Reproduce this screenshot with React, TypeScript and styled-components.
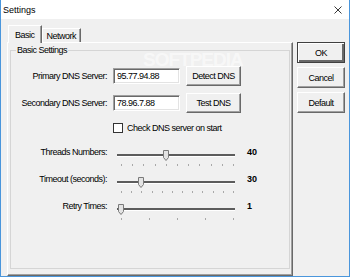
import React from 'react';
import styled, { createGlobalStyle } from 'styled-components';

const GlobalStyle = createGlobalStyle`
  html, body {
    margin: 0;
    padding: 0;
    background: #f0f0f0;
  }
  body {
    font-family: "Liberation Sans", Arial, sans-serif;
    font-size: 9px;
    letter-spacing: -0.5px;
    color: #000;
  }
`;

const Window = styled.div`
  position: relative;
  width: 350px;
  height: 277px;
  box-sizing: border-box;
  border: 1px solid #4a96dc;
  border-top: none;
  display: flex;
  flex-direction: column;
  background: #f0f0f0;
  overflow: hidden;
`;

const TitleBar = styled.div`
  height: 19px;
  flex: none;
  background: #fff;
  display: flex;
  align-items: center;
  justify-content: space-between;
  padding: 0 7px 0 2px;
`;

const Title = styled.span`
  font-size: 9px;
  letter-spacing: 0;
  line-height: 12px;
`;

const Body = styled.div`
  flex: 1;
  display: flex;
  padding: 6px 4px 0 6px;
  gap: 4px;
`;

const TabControl = styled.div`
  width: 286px;
  display: flex;
  flex-direction: column;
`;

const TabStrip = styled.div`
  height: 17px;
  display: flex;
  align-items: flex-end;
  padding-left: 1px;
`;

const Tab = styled.div<{ active?: boolean }>`
  box-sizing: border-box;
  height: ${p => (p.active ? '18px' : '14px')};
  margin-bottom: ${p => (p.active ? '-1px' : '0')};
  padding: 0 ${p => (p.active ? '6px' : '4px')};
  display: flex;
  align-items: center;
  background: #f0f0f0;
  border: 1px solid #fff;
  border-right-color: #696969;
  border-bottom: none;
  box-shadow: inset -1px 0 #a0a0a0;
  position: relative;
  z-index: ${p => (p.active ? 1 : 0)};
  line-height: 12px;
`;

const Panel = styled.div`
  flex: 1;
  box-sizing: border-box;
  display: flex;
  flex-direction: column;
  border: 1px solid;
  border-color: #fff #696969 #696969 #fff;
  box-shadow: inset -1px -1px #a0a0a0;
`;

const Group = styled.fieldset`
  flex: 1;
  margin: 1px 2px 6px 2px;
  padding: 0;
  border: 1px solid #d5d5d5;
  min-width: 0;
`;

const Legend = styled.legend`
  margin-left: 5px;
  padding: 0 1px;
  line-height: 12px;
`;

const Content = styled.div`
  padding-top: 10px;
  display: flex;
  flex-direction: column;
`;

const Row = styled.div<{ top?: number }>`
  display: flex;
  align-items: center;
  height: 20px;
  margin-top: ${p => p.top ?? 0}px;
`;

const SliderRow = styled.div<{ top: number }>`
  display: flex;
  align-items: flex-start;
  height: 20px;
  margin-top: ${p => p.top}px;
`;

const Label = styled.div`
  width: 96px;
  flex: none;
  text-align: right;
  line-height: 12px;
  margin-right: 6px;
  white-space: nowrap;
`;

const TextBox = styled.div`
  width: 67px;
  height: 16px;
  box-sizing: border-box;
  background: #fff;
  border: 1px solid;
  border-color: #a0a0a0 #fff #fff #a0a0a0;
  box-shadow: inset 1px 1px #696969, inset -1px -1px #e3e3e3;
  padding: 1px 0 0 3px;
  line-height: 12px;
`;

const Button = styled.div<{ isDefault?: boolean }>`
  box-sizing: border-box;
  display: flex;
  align-items: center;
  justify-content: center;
  background: #f0f0f0;
  border: 1px solid;
  border-color: ${p => (p.isDefault ? '#404040' : '#fff #696969 #696969 #fff')};
  box-shadow: ${p =>
    p.isDefault
      ? 'inset 1px 1px #fff, inset -2px -2px #696969'
      : 'inset -1px -1px #a0a0a0'};
  line-height: 12px;
  white-space: nowrap;
`;

const SideButton = styled(Button)`
  width: 48px;
  height: 21px;
`;

const DnsButton = styled(Button)`
  width: 55px;
  height: 20px;
  margin-left: 6px;
`;

const ButtonColumn = styled.div`
  display: flex;
  flex-direction: column;
  gap: 4px;
  padding-top: 17px;
`;

const CheckRow = styled.div`
  display: flex;
  align-items: center;
  height: 14px;
  margin-top: 8px;
  padding-left: 102px;
  gap: 4px;
  line-height: 12px;
`;

const CheckBox = styled.div`
  width: 10px;
  height: 10px;
  box-sizing: border-box;
  border: 1px solid #333;
  background: #fff;
`;

const SliderBox = styled.div`
  position: relative;
  width: 126px;
  height: 16px;
  margin-top: 4px;
  flex: none;
`;

const Track = styled.div`
  position: absolute;
  left: 4px;
  right: 4px;
  top: 4px;
  height: 2px;
  background: #5c5c5c;
  border-bottom: 1px solid #fff;
`;

const Ticks = styled.div`
  position: absolute;
  left: 8px;
  top: 14px;
  width: 113px;
  display: flex;
  justify-content: space-between;
`;

const Tick = styled.span`
  width: 1px;
  height: 2px;
  background: #a8a8a8;
`;

const Thumb = styled.svg`
  position: absolute;
  top: 0;
`;

const Value = styled.div`
  margin-left: 8px;
  font-weight: bold;
  letter-spacing: 0;
  line-height: 12px;
`;

const Watermark = styled.div`
  position: absolute;
  left: 142px;
  top: 53px;
  font-weight: bold;
  font-size: 19px;
  line-height: 14px;
  letter-spacing: -1px;
  color: rgba(255, 255, 255, 0.5);
  pointer-events: none;
`;

interface SliderProps {
  label: string;
  value: string;
  ticks: number;
  index: number;
  top: number;
}

const Slider: React.FC<SliderProps> = ({ label, value, ticks, index, top }) => {
  const center = 8 + (112 * index) / (ticks - 1);
  return (
    <SliderRow top={top}>
      <Label>{label}</Label>
      <SliderBox>
        <Track />
        <Ticks>
          {Array.from({ length: ticks }).map((_, i) => (
            <Tick key={i} />
          ))}
        </Ticks>
        <Thumb width="7" height="11" viewBox="0 0 7 11" style={{ left: center - 3 }}>
          <polygon points="0.5,0.5 5.5,0.5 5.5,7.5 3,10.5 0.5,7.5" fill="#e3e3e3" stroke="#7a7a7a" />
        </Thumb>
      </SliderBox>
      <Value>{value}</Value>
    </SliderRow>
  );
};

const CloseIcon = () => (
  <svg width="8" height="8" viewBox="0 0 8 8">
    <path d="M0.5 0.5 L7.5 7.5 M7.5 0.5 L0.5 7.5" stroke="#222" strokeWidth="0.9" />
  </svg>
);

export default function App() {
  return (
    <>
      <GlobalStyle />
      <Window>
        <TitleBar>
          <Title>Settings</Title>
          <CloseIcon />
        </TitleBar>
        <Body>
          <TabControl>
            <TabStrip>
              <Tab active>Basic</Tab>
              <Tab>Network</Tab>
            </TabStrip>
            <Panel>
              <Group>
                <Legend>Basic Settings</Legend>
                <Content>
                  <Row>
                    <Label>Primary DNS Server:</Label>
                    <TextBox>95.77.94.88</TextBox>
                    <DnsButton>Detect DNS</DnsButton>
                  </Row>
                  <Row top={7}>
                    <Label>Secondary DNS Server:</Label>
                    <TextBox>78.96.7.88</TextBox>
                    <DnsButton>Test DNS</DnsButton>
                  </Row>
                  <CheckRow>
                    <CheckBox />
                    Check DNS server on start
                  </CheckRow>
                  <Slider label="Threads Numbers:" value="40" ticks={11} index={4} top={11} />
                  <Slider label="Timeout (seconds):" value="30" ticks={12} index={2} top={7} />
                  <Slider label="Retry Times:" value="1" ticks={5} index={0} top={7} />
                </Content>
              </Group>
            </Panel>
          </TabControl>
          <ButtonColumn>
            <SideButton isDefault>OK</SideButton>
            <SideButton>Cancel</SideButton>
            <SideButton>Default</SideButton>
          </ButtonColumn>
        </Body>
        <Watermark>SOFTPEDIA</Watermark>
      </Window>
    </>
  );
}
